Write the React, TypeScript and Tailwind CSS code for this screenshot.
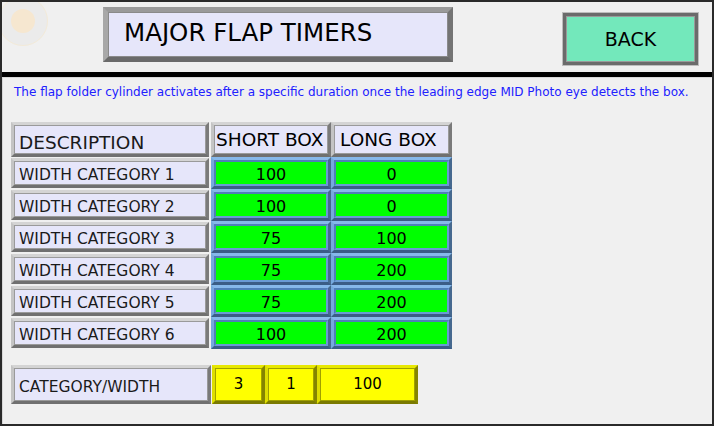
import React from "react";

const rows = [
  { label: "WIDTH CATEGORY 1", short: "100", long: "0" },
  { label: "WIDTH CATEGORY 2", short: "100", long: "0" },
  { label: "WIDTH CATEGORY 3", short: "75", long: "100" },
  { label: "WIDTH CATEGORY 4", short: "75", long: "200" },
  { label: "WIDTH CATEGORY 5", short: "75", long: "200" },
  { label: "WIDTH CATEGORY 6", short: "100", long: "200" },
];

// gray beveled label cell
function LabelCell({ children, className = "" }: { children: React.ReactNode; className?: string }) {
  return (
    <div className={`border-[3px] border-t-[#d4d4d4] border-l-[#c4c4c4] border-b-[#707070] border-r-[#7a7a7a] bg-[#b0b0b0] ${className}`}>
      <div className="h-full border border-[#9a9a9a] bg-[#e6e6fa] flex items-end px-[4px] text-[#1a1a1a] overflow-hidden">
        {children}
      </div>
    </div>
  );
}

// green numeric display
function GreenCell({ value }: { value: string }) {
  return (
    <div className="h-full border-[3px] border-t-[#86b8ea] border-l-[#76a9de] border-b-[#3b5d86] border-r-[#46698f] bg-[#5b8fcf]">
      <div className="h-full border-2 border-t-[#4f7fb8] border-l-[#4f7fb8] border-b-[#6a9ad4] border-r-[#6a9ad4] bg-[#00ff00] flex items-center justify-center pt-[3px] text-[16px] text-black">
        {value}
      </div>
    </div>
  );
}

function YellowCell({ value, w }: { value: string; w: string }) {
  return (
    <div className={`${w} h-full border-[3px] border-t-[#e8e800] border-l-[#dede00] border-b-[#7a7a00] border-r-[#858500] bg-[#c8c800]`}>
      <div className="h-full border border-[#a0a000] bg-[#ffff00] flex items-center justify-center text-[15px] text-black">
        {value}
      </div>
    </div>
  );
}

export default function App() {
  return (
    <div
      className="w-[714px] h-[426px] bg-[#f0f0f0] border-2 border-[#2a2a2a] flex flex-col overflow-hidden"
      style={{ fontFamily: '"DejaVu Sans", Verdana, sans-serif' }}
    >
      {/* Header */}
      <header className="h-[70px] shrink-0 relative flex items-start">
        <div className="absolute left-[-4px] top-[-6px] w-[50px] h-[50px] rounded-full bg-[#ebebeb] border border-[#f3ead8] flex items-center justify-center">
          <div className="w-[24px] h-[24px] rounded-full bg-[#f6e7d0]" />
        </div>
        <div className="ml-[101px] mt-[5px] w-[350px] h-[55px] border-[5px] border-t-[#9a9a9a] border-l-[#a8a8a8] border-b-[#6a6a6a] border-r-[#747474] bg-[#888]">
          <div className="h-full border border-[#8a8a8a] bg-[#e6e6fa] flex items-start pt-[5px] pl-[15px] text-[24.5px] leading-[30px] text-black">
            MAJOR FLAP TIMERS
          </div>
        </div>
        <div className="ml-[110px] mt-[11px] w-[135px] h-[52px] border-[3px] border-[#6b6b6b] bg-[#555] shadow-[0_0_0_1px_#bdbdbd]">
          <div className="h-full border border-[#9a9a9a] bg-[#73e8bb] flex items-center justify-center text-[19px] text-black">
            BACK
          </div>
        </div>
      </header>

      <div className="h-[5px] shrink-0 bg-black" />

      {/* Content */}
      <main className="flex-1 border-t border-l border-[#d8d8d8] pl-[8px] pt-[7px]">
        <p className="pl-[3px] text-[12px] text-[#2020ff] leading-[15px] whitespace-nowrap">
          The flap folder cylinder activates after a specific duration once the leading edge MID Photo eye detects the box.
        </p>

        <div className="mt-[22px] grid grid-cols-[200px_120px_121px] grid-rows-[35px_repeat(6,32px)]">
          <LabelCell className="mr-[2px]">
            <span className="text-[18.5px] leading-[20px]">DESCRIPTION</span>
          </LabelCell>
          <div className="border-[3px] border-t-[#d4d4d4] border-l-[#c4c4c4] border-b-[#707070] border-r-[#7a7a7a] bg-[#b0b0b0]">
            <div className="h-full border border-[#9a9a9a] bg-[#e6e6fa] flex items-start pt-[2px] pl-[1px] text-[18.5px] text-black leading-[24px]">
              SHORT BOX
            </div>
          </div>
          <div className="border-[3px] border-t-[#d4d4d4] border-l-[#c4c4c4] border-b-[#707070] border-r-[#7a7a7a] bg-[#b0b0b0]">
            <div className="h-full border border-[#9a9a9a] bg-[#e6e6fa] flex items-start pt-[2px] pl-[5px] text-[18.5px] text-black leading-[24px]">
              LONG BOX
            </div>
          </div>

          {rows.map((r) => (
            <React.Fragment key={r.label}>
              <LabelCell className="mr-[2px] my-[1px]">
                <span className="text-[15.5px] leading-[17px]">{r.label}</span>
              </LabelCell>
              <GreenCell value={r.short} />
              <GreenCell value={r.long} />
            </React.Fragment>
          ))}
        </div>

        <div className="mt-[16px] h-[39px] flex">
          <LabelCell className="w-[200px] mr-[1px]">
            <span className="text-[15.5px] leading-[26px]">CATEGORY/WIDTH</span>
          </LabelCell>
          <YellowCell value="3" w="w-[53px]" />
          <YellowCell value="1" w="w-[52px]" />
          <YellowCell value="100" w="w-[101px]" />
        </div>
      </main>
    </div>
  );
}
